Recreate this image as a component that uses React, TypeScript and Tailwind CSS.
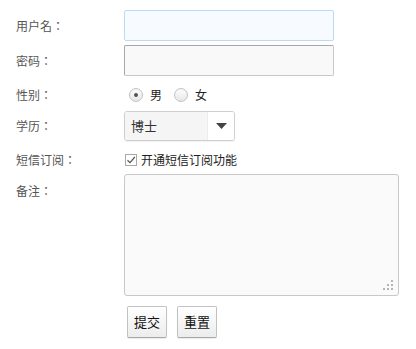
import React from "react";

const font = { fontFamily: '"Noto Sans CJK SC", "Noto Sans", sans-serif' };
const labelFont = { fontFamily: '"Noto Sans CJK JP", "Noto Sans CJK SC", sans-serif' };

function Label({ text, className = "" }: { text: string; className?: string }) {
  return (
    <div className={`w-[124px] shrink-0 pl-[16px] text-[12px] text-[#555] ${className}`} style={labelFont}>
      {text}
    </div>
  );
}

function Radio({ checked }: { checked?: boolean }) {
  return (
    <span className="flex h-[14px] w-[14px] items-center justify-center rounded-full border border-[#c4c4c4] bg-gradient-to-b from-white to-[#e6e6e6] shadow-[inset_0_1px_1px_rgba(0,0,0,0.05)]">
      {checked && <span className="h-[4px] w-[4px] rounded-full bg-[#555]" />}
    </span>
  );
}

export default function App() {
  return (
    <div className="h-[349px] w-[416px] bg-white pt-[10px] text-[#222]" style={font}>
      {/* username */}
      <div className="flex h-[31px] items-center">
        <Label text="用户名：" />
        <div className="h-[31px] w-[210px] rounded-[2px] border border-[#b8dcf6] bg-[#f7fbff]" />
      </div>

      {/* password */}
      <div className="mt-[4px] flex h-[31px] items-center">
        <Label text="密码：" />
        <div className="h-[31px] w-[210px] rounded-[2px] border border-[#c8c8c8] border-t-[#a6a6a6] border-l-[#a6a6a6] bg-[#f9f9f9]" />
      </div>

      {/* gender */}
      <div className="mt-[4px] flex h-[30px] items-center">
        <Label text="性别：" />
        <div className="flex items-center pl-[5px] text-[12px]">
          <Radio checked />
          <span className="ml-[7px]">男</span>
          <span className="ml-[12px]">
            <Radio />
          </span>
          <span className="ml-[7px]">女</span>
        </div>
      </div>

      {/* education */}
      <div className="mt-[1px] flex h-[30px] items-center">
        <Label text="学历：" />
        <div className="flex h-[30px] w-[111px] overflow-hidden rounded-[3px] border border-[#cfcfcf] shadow-[0_1px_1px_rgba(0,0,0,0.06)]">
          <div className="flex flex-1 items-center bg-[#f5f5f5] pl-[6px] text-[13px] text-[#333]">博士</div>
          <div className="flex w-[27px] items-center justify-center border-l border-[#ececec] bg-white">
            <svg width="11" height="6" viewBox="0 0 11 6">
              <path d="M0 0 H11 L5.5 6 Z" fill="#444" />
            </svg>
          </div>
        </div>
      </div>

      {/* sms */}
      <div className="mt-[8px] flex h-[22px] items-center">
        <Label text="短信订阅：" />
        <div className="flex items-center pl-[1px] text-[12px]">
          <span className="flex h-[12px] w-[12px] items-center justify-center border border-[#a8a8a8] bg-white">
            <svg width="10" height="10" viewBox="0 0 10 10">
              <path d="M1.5 5.2 L4 7.6 L8.8 2" stroke="#555" strokeWidth="1.2" fill="none" />
            </svg>
          </span>
          <span className="ml-[4px]">开通短信订阅功能</span>
        </div>
      </div>

      {/* remarks */}
      <div className="mt-[3px] flex">
        <Label text="备注：" className="pt-[8px]" />
        <div className="relative h-[122px] w-[275px] rounded-[3px] border border-[#c8c8c8] bg-[#fafafa]">
          <svg className="absolute bottom-[4px] right-[4px]" width="11" height="11" viewBox="0 0 11 11">
            <g fill="#b5b5b5">
              <rect x="8" y="0" width="2" height="2" />
              <rect x="4" y="4" width="2" height="2" />
              <rect x="8" y="4" width="2" height="2" />
              <rect x="0" y="8" width="2" height="2" />
              <rect x="4" y="8" width="2" height="2" />
              <rect x="8" y="8" width="2" height="2" />
            </g>
          </svg>
        </div>
      </div>

      {/* buttons */}
      <div className="mt-[10px] flex gap-[10px] pl-[127px]">
        {["提交", "重置"].map((t) => (
          <button
            key={t}
            className="flex h-[32px] w-[40px] items-center justify-center rounded-[2px] border border-[#c2c2c2] border-b-[#a8a8a8] bg-gradient-to-b from-white to-[#ececec] text-[13px] text-[#111] shadow-[0_1px_1px_rgba(0,0,0,0.08)]"
          >
            {t}
          </button>
        ))}
      </div>
    </div>
  );
}
